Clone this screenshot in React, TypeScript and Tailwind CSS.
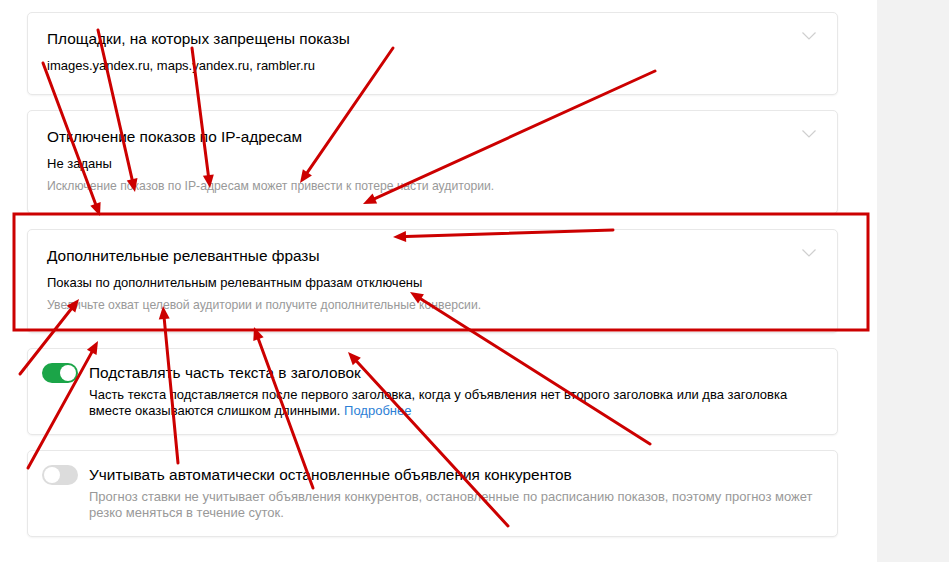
import React from "react";

type Arrow = [number, number, number, number];

const arrows: Arrow[] = [
  [43, 63, 100, 216],
  [98, 30, 135, 192],
  [192, 48, 210, 188],
  [393, 48, 300, 183],
  [655, 71, 363, 204],
  [613, 230, 393, 237],
  [20, 374, 79, 299],
  [28, 468, 98, 341],
  [178, 463, 163, 306],
  [313, 488, 254, 327],
  [508, 526, 348, 352],
  [650, 444, 410, 292],
];

const RED = "#cc0000";

const RedArrow = ({ a }: { a: Arrow }) => {
  const [x1, y1, x2, y2] = a;
  const ang = Math.atan2(y2 - y1, x2 - x1);
  const len = 13;
  const half = 5.5;
  const bx = x2 - len * Math.cos(ang);
  const by = y2 - len * Math.sin(ang);
  const pts = [
    `${x2},${y2}`,
    `${bx + half * Math.sin(ang)},${by - half * Math.cos(ang)}`,
    `${bx - half * Math.sin(ang)},${by + half * Math.cos(ang)}`,
  ].join(" ");
  return (
    <g>
      <line x1={x1} y1={y1} x2={bx} y2={by} stroke={RED} strokeWidth={3} strokeLinecap="round" />
      <polygon points={pts} fill={RED} />
    </g>
  );
};

const Chevron = () => (
  <svg width="14" height="8" viewBox="0 0 14 8" className="mt-[3px] shrink-0">
    <path d="M0.5 0.5 L7 7 L13.5 0.5" fill="none" stroke="#cfcfcf" strokeWidth="1.2" />
  </svg>
);

const Toggle = ({ on }: { on: boolean }) => (
  <div
    className={
      on
        ? "w-[36px] h-[20px] rounded-full bg-[#1ba548] flex items-center justify-end px-[2px] shrink-0"
        : "w-[36px] h-[20px] rounded-full bg-[#dcdcdc] flex items-center justify-start px-[2px] shrink-0"
    }
  >
    <div className="w-[16px] h-[16px] rounded-full bg-white" />
  </div>
);

const cardCls =
  "bg-white rounded-[5px] border border-[#e8e8e8] shadow-[0_1px_2px_rgba(0,0,0,0.05)]";

const Section = ({
  title,
  value,
  hint,
  pb,
}: {
  title: string;
  value: string;
  hint?: string;
  pb: string;
}) => (
  <div className={`${cardCls} pl-[19px] pr-[21px] pt-[16px] ${pb}`}>
    <div className="flex items-start justify-between">
      <div className="text-[15.4px] leading-[20px] text-black">{title}</div>
      <Chevron />
    </div>
    <div className="mt-[9px] text-[13px] leading-[16px] text-black">{value}</div>
    {hint && <div className="mt-[6px] text-[12.2px] leading-[16px] text-[#999]">{hint}</div>}
  </div>
);

const SwitchCard = ({
  on,
  title,
  children,
}: {
  on: boolean;
  title: string;
  children: React.ReactNode;
}) => (
  <div className={`${cardCls} pl-[14px] pr-[16px] pt-[14px] pb-[15px] flex gap-[11px]`}>
    <Toggle on={on} />
    <div>
      <div className="text-[15.4px] leading-[20px] text-black">{title}</div>
      <div className="mt-[4px] text-[13px] leading-[16px]">{children}</div>
    </div>
  </div>
);

export default function App() {
  return (
    <div className="relative flex w-[949px] h-[562px] overflow-hidden bg-white font-['Liberation_Sans',Arial,sans-serif]">
      <div className="w-[877px] pl-[27px] pr-[39px] pt-[12px] flex flex-col gap-[15px]">
        <Section
          title="Площадки, на которых запрещены показы"
          value="images.yandex.ru, maps.yandex.ru, rambler.ru"
          pb="pb-[20px]"
        />
        <Section
          title="Отключение показов по IP-адресам"
          value="Не заданы"
          hint="Исключение показов по IP-адресам может привести к потере части аудитории."
          pb="pb-[19px]"
        />
        <Section
          title="Дополнительные релевантные фразы"
          value="Показы по дополнительным релевантным фразам отключены"
          hint="Увеличьте охват целевой аудитории и получите дополнительные конверсии."
          pb="pb-[19px]"
        />
        <SwitchCard on title="Подставлять часть текста в заголовок">
          <span className="text-black">
            Часть текста подставляется после первого заголовка, когда у объявления нет второго заголовка или два заголовка
            <br />
            вместе оказываются слишком длинными.{" "}
          </span>
          <span className="text-[#2d7fd6]">Подробнее</span>
        </SwitchCard>
        <SwitchCard on={false} title="Учитывать автоматически остановленные объявления конкурентов">
          <span className="text-[#999]">
            Прогноз ставки не учитывает объявления конкурентов, остановленные по расписанию показов, поэтому прогноз может
            <br />
            резко меняться в течение суток.
          </span>
        </SwitchCard>
      </div>
      <div className="flex-1 bg-[#f2f2f2]" />

      <svg className="absolute inset-0 pointer-events-none" width="949" height="562" viewBox="0 0 949 562">
        <rect x="14" y="214" width="854" height="116" fill="none" stroke={RED} strokeWidth="3" />
        {arrows.map((a, i) => (
          <RedArrow key={i} a={a} />
        ))}
      </svg>
    </div>
  );
}
